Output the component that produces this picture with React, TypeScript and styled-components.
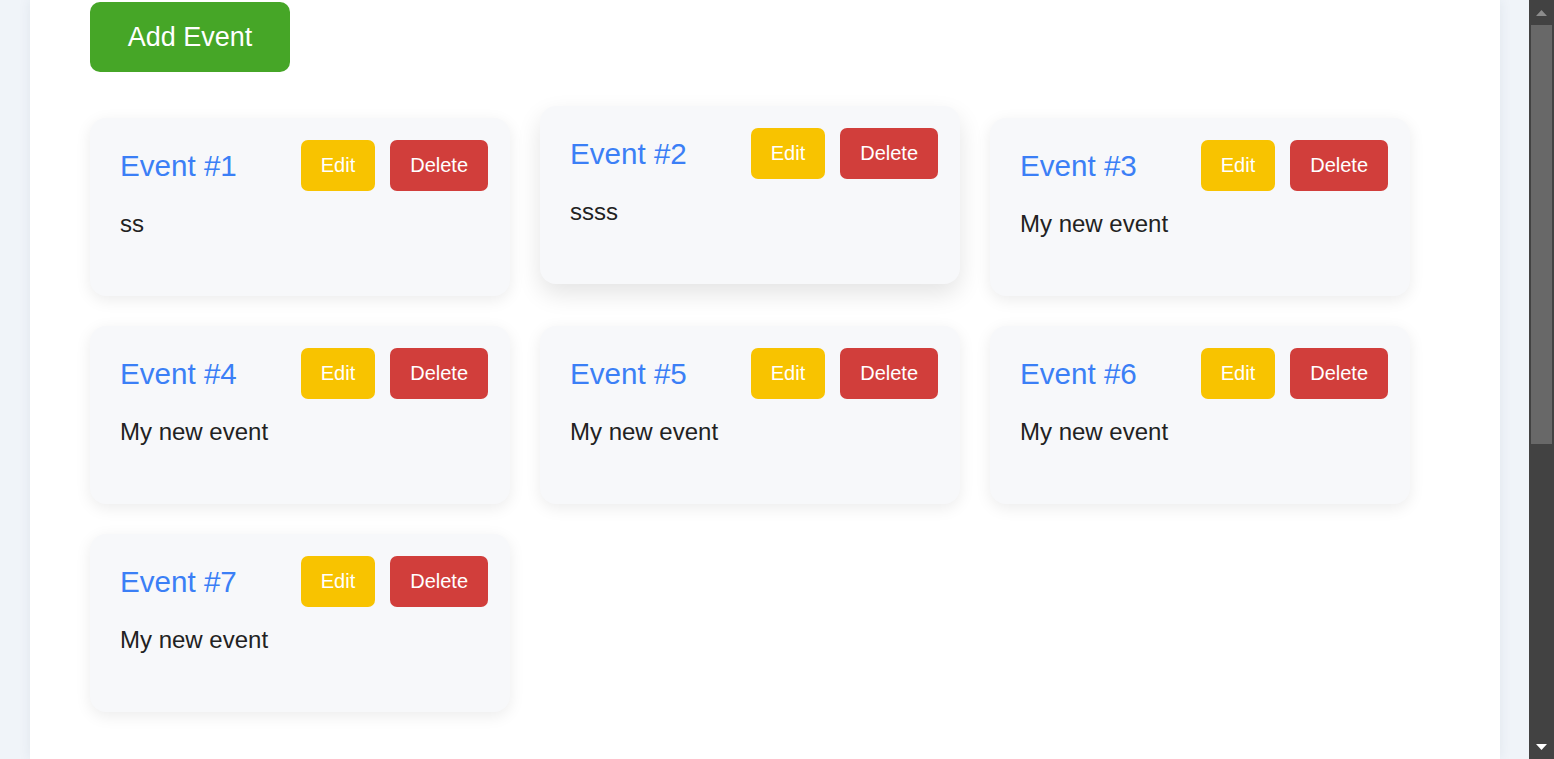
import React from 'react'
import styled, { createGlobalStyle } from 'styled-components'

const events = [
  { id: 1, text: 'ss' },
  { id: 2, text: 'ssss', lifted: true },
  { id: 3, text: 'My new event' },
  { id: 4, text: 'My new event' },
  { id: 5, text: 'My new event' },
  { id: 6, text: 'My new event' },
  { id: 7, text: 'My new event' },
]

function App() {
  return (
    <>
      <GlobalStyle />
      <Shell>
        <Page>
          <Container>
            <AddButton>Add Event</AddButton>
            <EventGrid>
              {events.map((ev) => (
                <Card key={ev.id} $lifted={!!ev.lifted}>
                  <CardHeader>
                    <Title>Event #{ev.id}</Title>
                    <Actions>
                      <ActionButton $kind="edit">Edit</ActionButton>
                      <ActionButton $kind="delete">Delete</ActionButton>
                    </Actions>
                  </CardHeader>
                  <Description>{ev.text}</Description>
                </Card>
              ))}
            </EventGrid>
          </Container>
        </Page>
        <Scrollbar>
          <Arrow>
            <svg width="11" height="6" viewBox="0 0 11 6">
              <polygon points="0,6 5.5,0 11,6" fill="#8c8c8c" />
            </svg>
          </Arrow>
          <Thumb />
          <TrackRest />
          <Arrow>
            <svg width="11" height="6" viewBox="0 0 11 6">
              <polygon points="0,0 11,0 5.5,6" fill="#ffffff" />
            </svg>
          </Arrow>
        </Scrollbar>
      </Shell>
    </>
  )
}

export default App

// styles

const GlobalStyle = createGlobalStyle`
  html, body, #root {
    margin: 0;
    height: 100%;
  }
  body {
    font-family: "Liberation Sans", Arial, sans-serif;
    overflow: hidden;
  }
`

const Shell = styled.div`
  display: flex;
  height: 100vh;
  width: 100%;
`

const Page = styled.div`
  flex: 1;
  display: flex;
  background: #f0f4f9;
  padding-left: 30px;
  overflow: hidden;
`

const Container = styled.div`
  width: 1470px;
  min-height: 100%;
  box-sizing: border-box;
  background: #ffffff;
  box-shadow: 0 0 12px rgba(40, 60, 90, 0.08);
  padding: 2px 60px 40px;
`

const AddButton = styled.button`
  display: block;
  width: 200px;
  height: 70px;
  border: none;
  border-radius: 10px;
  background: #46a627;
  color: #ffffff;
  font-family: "Liberation Sans", Arial, sans-serif;
  font-size: 27px;
  margin-bottom: 46px;
  cursor: pointer;
`

const EventGrid = styled.div`
  display: grid;
  grid-template-columns: repeat(3, 420px);
  column-gap: 30px;
  row-gap: 30px;
`

const Card = styled.div<{ $lifted: boolean }>`
  background: #f7f8fa;
  border-radius: 16px;
  padding: 22px 22px 58px 30px;
  box-shadow: ${(p) =>
    p.$lifted ? '0 10px 24px rgba(0, 0, 0, 0.11)' : '0 4px 16px rgba(0, 0, 0, 0.08)'};
  transform: ${(p) => (p.$lifted ? 'translateY(-12px)' : 'none')};
`

const CardHeader = styled.div`
  display: flex;
  align-items: center;
  justify-content: space-between;
`

const Title = styled.h3`
  margin: 0;
  font-weight: normal;
  font-size: 29.6px;
  color: #3b7ff6;
`

const Actions = styled.div`
  display: flex;
  gap: 15px;
`

const ActionButton = styled.button<{ $kind: 'edit' | 'delete' }>`
  height: 51px;
  padding: 0 20px;
  border: none;
  border-radius: 7px;
  background: ${(p) => (p.$kind === 'edit' ? '#f8c300' : '#d13e3b')};
  color: #ffffff;
  font-family: "Liberation Sans", Arial, sans-serif;
  font-size: 20px;
  cursor: pointer;
`

const Description = styled.p`
  margin: 19px 0 0;
  font-size: 24px;
  color: #222222;
`

const Scrollbar = styled.div`
  width: 25px;
  flex: 0 0 25px;
  background: #424242;
  display: flex;
  flex-direction: column;
  align-items: center;
`

const Arrow = styled.div`
  height: 25px;
  width: 100%;
  display: flex;
  align-items: center;
  justify-content: center;
`

const Thumb = styled.div`
  width: 21px;
  height: 419px;
  background: #686868;
`

const TrackRest = styled.div`
  flex: 1;
`
